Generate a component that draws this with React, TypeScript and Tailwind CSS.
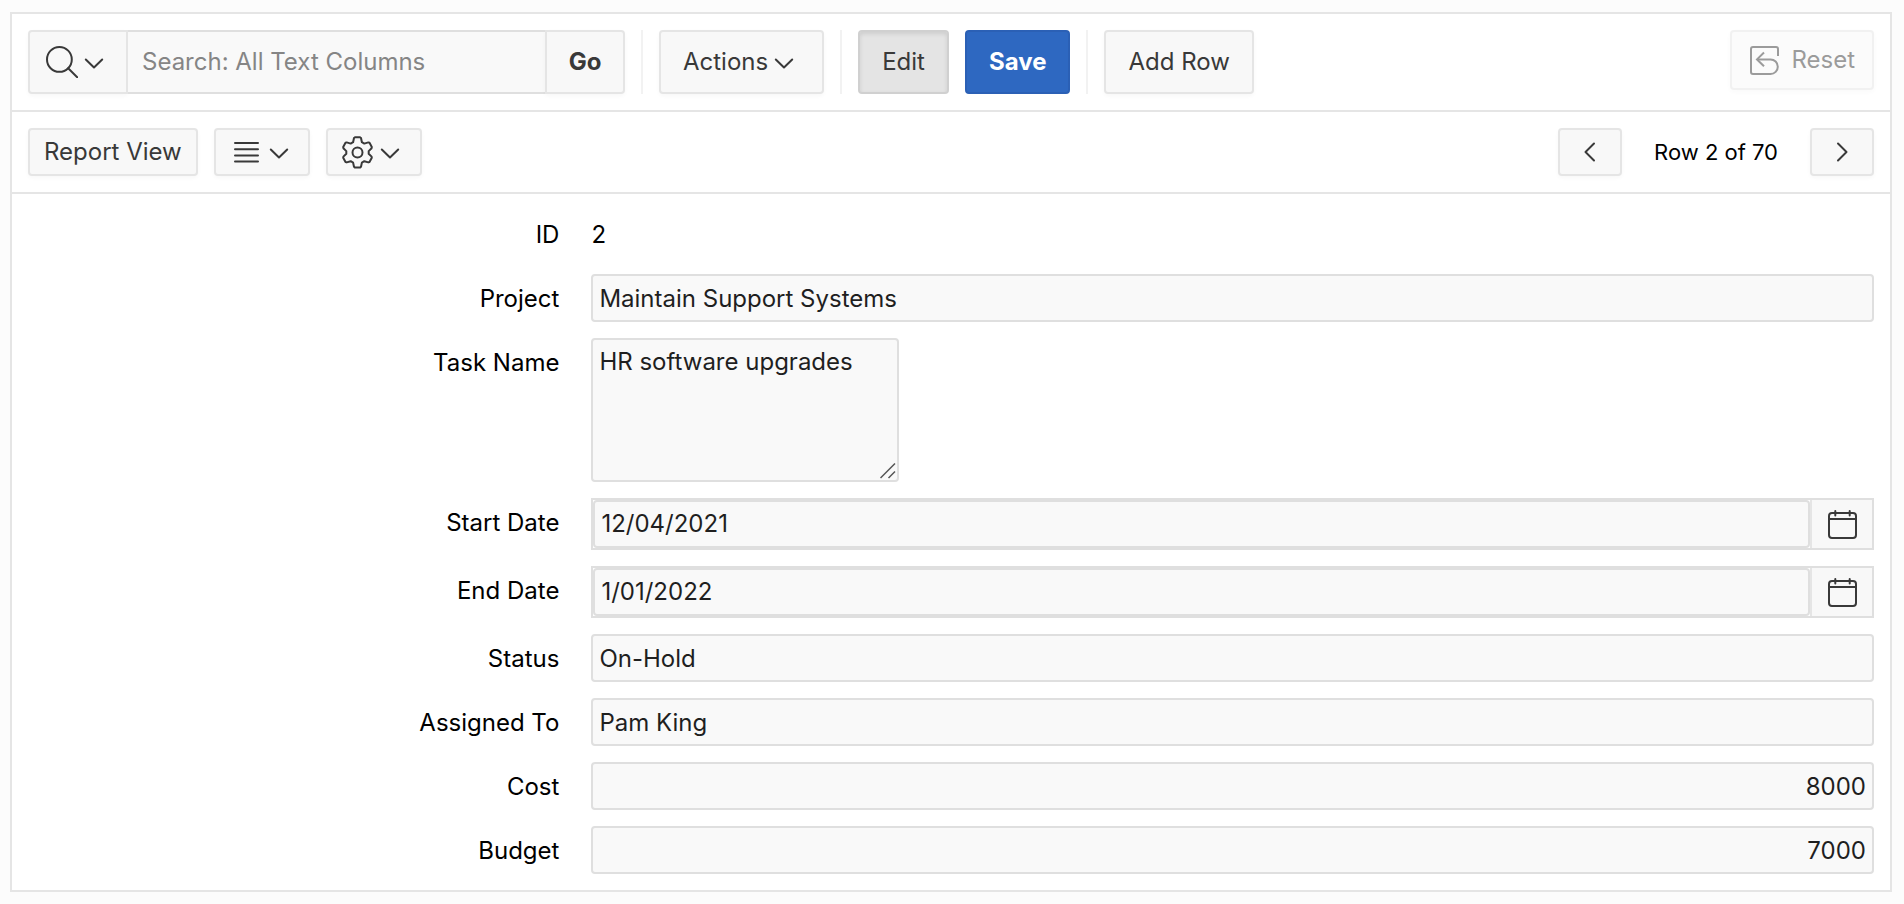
import type { ComponentProps, ReactNode } from "react";

const strokeProps = { fill: "none", stroke: "currentColor", strokeWidth: 2 } as const;

function ChevronDown() {
  return (
    <svg width="24" height="24" viewBox="0 0 24 24" {...strokeProps} strokeLinecap="round" strokeLinejoin="round" aria-hidden="true">
      <path d="M3.800 9.500l8.200 8 8.200-8" />
    </svg>
  );
}

function SearchIcon() {
  return (
    <svg width="32" height="32" viewBox="0 0 32 32" {...strokeProps} strokeLinecap="round" aria-hidden="true">
      <circle cx="13.400" cy="13.400" r="12.400" />
      <path d="M22.200 22.200l9 9" />
    </svg>
  );
}

function LinesIcon() {
  return (
    <svg width="25" height="22" viewBox="0 0 25 22" {...strokeProps} strokeLinecap="round" aria-hidden="true">
      <path d="M1 2h23M1 8.200h23M1 14.400h23M1 20.600h23" />
    </svg>
  );
}

function GearIcon() {
  return (
    <svg width="32" height="34" viewBox="0 -1 32 34" {...strokeProps} strokeLinejoin="round" aria-hidden="true">
      <circle cx="15.500" cy="16.400" r="5" />
      <path d="M13 1.200h5l1 .8 .9 4.200 2.400 1.400 4-1.200 1.200 .4 2.300 4.200-.2 1.200-2.900 2.900v2.600l2.900 2.900 .2 1.200-2.300 4.200-1.200 .4-4-1.200-2.400 1.400-.9 4.200-1 .8h-5l-1-.8-.9-4.200-2.400-1.400-4 1.200-1.200-.4-2.300-4.200 .2-1.200 2.900-2.900v-2.600l-2.900-2.900-.2-1.200 2.300-4.200 1.200-.4 4 1.200 2.400-1.400 .9-4.200z" />
    </svg>
  );
}

function ResetIcon() {
  return (
    <svg width="30" height="30" viewBox="0 0 30 30" {...strokeProps} aria-hidden="true">
      <path d="M29 11V4a2 2 0 0 0-2-2H4a2 2 0 0 0-2 2v23a2 2 0 0 0 2 2h17.500a7.300 7.300 0 0 0 0-14.600H8" />
      <path d="M15 7.500l-7 6.900 7 6.900" />
    </svg>
  );
}

function CalendarIcon() {
  return (
    <svg width="30" height="30" viewBox="0 0 30 30" {...strokeProps} strokeLinecap="round" aria-hidden="true">
      <rect x="2" y="4" width="27" height="25" rx="3" />
      <path d="M2 10h27M8.300 2v4.500M22.700 2v4.500" />
    </svg>
  );
}

function ChevronSide({ d }: { d: string }) {
  return (
    <svg width="12" height="20" viewBox="0 0 12 20" {...strokeProps} strokeLinecap="round" strokeLinejoin="round" aria-hidden="true">
      <path d={d} />
    </svg>
  );
}

const look = "flex items-center border-2 border-[#e5e5e5] bg-[#f8f8f8] text-[#393939]";

function Button({ className = "", ...rest }: ComponentProps<"button">) {
  return <button type="button" className={`${look} shadow-[0_2px_4px_rgba(0,0,0,0.03)] ${className}`} {...rest} />;
}

function Separator() {
  return <div className="h-16 w-0.5 bg-[#f2f2f2]" />;
}

function Row({ id, label, children }: { id: string; label: string; children: ReactNode }) {
  return (
    <div className="flex items-start">
      <label htmlFor={id} className="w-[30%] pt-0.5 pr-4 text-right leading-[46px]">
        {label}
      </label>
      <div className="w-[70%] px-4">{children}</div>
    </div>
  );
}

const field = "block rounded border-2 border-[#dfdfdf] bg-[#f9f9f9] px-1.5 text-[#1f1f1f] outline-none";

function TextRow({ id, label, value, right }: { id: string; label: string; value: string; right?: boolean }) {
  return (
    <Row id={id} label={label}>
      <input id={id} type="text" defaultValue={value} className={`${field} h-12 w-full ${right ? "text-right" : ""}`} />
    </Row>
  );
}

function DateRow({ id, label, value }: { id: string; label: string; value: string }) {
  return (
    <Row id={id} label={label}>
      <div className="flex h-[52px] border-2 border-[#dfdfdf]">
        <input id={id} type="text" defaultValue={value} className={`${field} min-w-0 flex-1`} />
        <button
          type="button"
          aria-label={`${label} calendar`}
          className="flex w-[62px] items-center justify-center border-l-2 border-[#e5e5e5] bg-[#f8f8f8] text-[#393939]"
        >
          <CalendarIcon />
        </button>
      </div>
    </Row>
  );
}

export default function App() {
  return (
    <div className="min-h-screen bg-[#fcfcfc] py-3 pr-3 pl-2.5 font-['Inter',sans-serif] text-[24px] leading-8 text-black">
      <main className="border-2 border-[#e5e5e5] bg-white">
        <div className="flex items-start gap-4 border-b-2 border-[#e5e5e5] p-4">
          <div className="flex h-16">
            <Button aria-label="Select columns to search" className="w-[100px] gap-1 rounded-l pl-4">
              <SearchIcon />
              <ChevronDown />
            </Button>
            <input
              type="text"
              aria-label="Search"
              placeholder="Search: All Text Columns"
              className="w-[417px] border-y-2 border-[#dfdfdf] bg-[#f9f9f9] px-3.5 outline-none placeholder:text-[#858585]"
            />
            <Button className="w-20 justify-center rounded-r font-bold">Go</Button>
          </div>
          <Separator />
          <Button className="h-16 gap-1 rounded pr-[26px] pl-[22px]">
            Actions
            <ChevronDown />
          </Button>
          <Separator />
          <button
            type="button"
            aria-pressed="true"
            className="h-16 rounded border-2 border-[#d0d0d0] bg-[#e4e4e4] px-[22px] text-[#393939] shadow-[inset_0_2px_4px_rgba(0,0,0,0.1)]"
          >
            Edit
          </button>
          <button type="button" className="h-16 rounded border-2 border-[#2b60b5] bg-[#2e68c1] px-[22px] font-bold text-white">
            Save
          </button>
          <Separator />
          <Button className="h-16 rounded px-[22px]">Add Row</Button>
          <Button className="ml-auto h-[60px] gap-3 rounded px-[17px] opacity-50">
            <ResetIcon />
            Reset
          </Button>
        </div>

        <div className="flex items-center gap-4 border-b-2 border-[#e5e5e5] p-4">
          <Button className="h-12 rounded px-3.5">Report View</Button>
          <Button aria-label="Display options" className="h-12 w-24 gap-2 rounded pl-[18px]">
            <LinesIcon />
            <ChevronDown />
          </Button>
          <Button aria-label="Settings" className="h-12 w-24 gap-1 rounded pl-3.5">
            <GearIcon />
            <ChevronDown />
          </Button>
          <div className="ml-auto flex items-center gap-8">
            <Button aria-label="Previous row" className="h-12 w-16 justify-center rounded">
              <ChevronSide d="M10 1.500L1.500 10l8.500 8.500" />
            </Button>
            <span className="text-[22px]">Row 2 of 70</span>
            <Button aria-label="Next row" className="h-12 w-16 justify-center rounded">
              <ChevronSide d="M2 1.500L10.500 10 2 18.500" />
            </Button>
          </div>
        </div>

        <form className="flex flex-col gap-4 py-4">
          <Row id="row-id" label="ID">
            <output id="row-id" className="block pt-0.5 leading-[46px]">
              2
            </output>
          </Row>
          <TextRow id="project" label="Project" value="Maintain Support Systems" />
          <Row id="task" label="Task Name">
            <div className="relative w-fit">
              <textarea
                id="task"
                defaultValue="HR software upgrades"
                className={`${field} h-36 w-[308px] py-1.5 [&::-webkit-resizer]:hidden`}
              />
              <svg
                width="16"
                height="16"
                viewBox="0 0 16 16"
                className="pointer-events-none absolute right-[3px] bottom-[3px] text-[#555555]"
                {...strokeProps}
                strokeWidth="1.500"
                aria-hidden="true"
              >
                <path d="M.5 15L15 .5M8.500 15L15 8.500" />
              </svg>
            </div>
          </Row>
          <DateRow id="start" label="Start Date" value="12/04/2021" />
          <DateRow id="end" label="End Date" value="1/01/2022" />
          <TextRow id="status" label="Status" value="On-Hold" />
          <TextRow id="assigned" label="Assigned To" value="Pam King" />
          <TextRow id="cost" label="Cost" value="8000" right />
          <TextRow id="budget" label="Budget" value="7000" right />
        </form>
      </main>
    </div>
  );
}
